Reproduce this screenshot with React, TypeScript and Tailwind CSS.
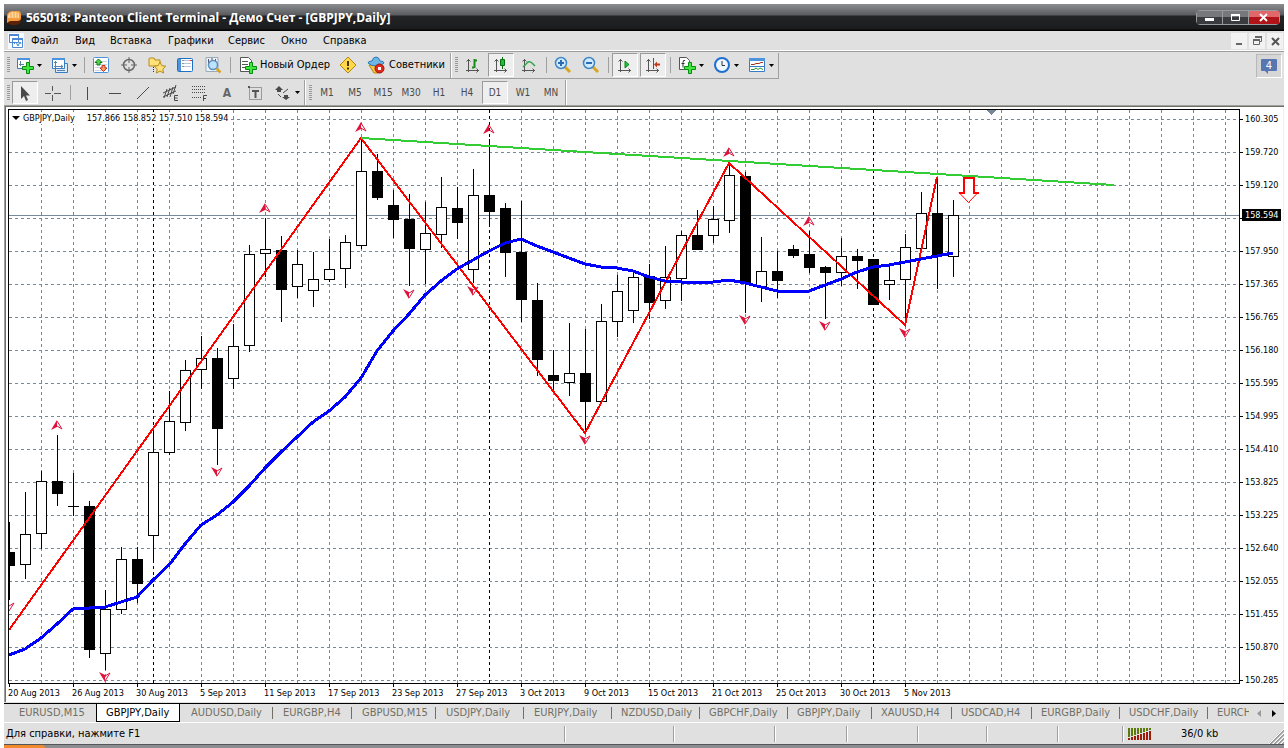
import type { ReactNode } from "react"
import clsx from "clsx"

// x step between bars is 16px: [high, body top, body bottom, low, filled]
const candles: [number, number, number, number, number][] = [
  [522, 552, 566, 600, 1],
  [492, 534, 565, 579, 0],
  [471, 481, 534, 549, 0],
  [435, 481, 494, 506, 1],
  [473, 506, 507, 516, 1],
  [501, 506, 650, 658, 1],
  [590, 609, 654, 670, 0],
  [547, 559, 610, 614, 0],
  [547, 559, 584, 603, 1],
  [428, 452, 536, 560, 0],
  [391, 421, 453, 455, 0],
  [360, 370, 423, 431, 0],
  [336, 358, 370, 389, 0],
  [348, 358, 429, 465, 1],
  [324, 346, 379, 389, 0],
  [245, 254, 346, 352, 0],
  [218, 249, 254, 277, 0],
  [236, 250, 290, 322, 1],
  [250, 264, 287, 298, 0],
  [252, 279, 291, 307, 0],
  [239, 269, 280, 282, 0],
  [235, 242, 269, 288, 0],
  [138, 171, 246, 249, 0],
  [154, 171, 198, 200, 1],
  [190, 205, 220, 238, 1],
  [194, 219, 249, 286, 1],
  [202, 233, 250, 284, 0],
  [177, 207, 235, 248, 0],
  [187, 208, 223, 239, 1],
  [169, 195, 270, 283, 0],
  [139, 195, 212, 225, 1],
  [203, 208, 253, 277, 1],
  [201, 252, 300, 322, 1],
  [283, 300, 360, 376, 1],
  [350, 375, 381, 393, 1],
  [323, 373, 383, 396, 0],
  [329, 373, 402, 432, 1],
  [304, 321, 402, 402, 0],
  [275, 291, 322, 337, 0],
  [272, 277, 311, 323, 0],
  [264, 276, 303, 319, 1],
  [246, 277, 301, 309, 0],
  [231, 235, 279, 301, 0],
  [210, 235, 250, 250, 1],
  [206, 219, 236, 243, 0],
  [163, 175, 221, 233, 0],
  [172, 176, 284, 313, 1],
  [237, 271, 287, 302, 0],
  [251, 271, 281, 298, 1],
  [245, 249, 256, 258, 1],
  [231, 254, 268, 273, 1],
  [266, 267, 273, 319, 1],
  [238, 256, 273, 286, 0],
  [249, 256, 261, 289, 1],
  [259, 259, 305, 305, 1],
  [266, 280, 285, 300, 0],
  [234, 247, 280, 324, 0],
  [192, 213, 249, 249, 0],
  [177, 213, 256, 289, 1],
  [200, 215, 257, 277, 0],
]

const movingAverage =
  "9,655 25,649 41,638 57,624 73,609 105,607 121,602 137,597 153,580 169,565 185,544 201,525 217,515 233,502 249,486 265,468 281,452 297,437 313,422 329,411 345,397 361,378 377,351 393,331 409,314 425,295 441,281 457,269 473,260 489,251 505,243 521,239 537,246 553,252 569,258 585,264 601,267 617,268 633,271 649,277 665,281 681,282 713,282 729,280 745,283 761,287 777,291 809,291 825,285 841,279 857,272 873,267 889,265 905,262 921,259 937,256 953,253"

const fractalsUp = [
  [57, 425],
  [265, 208],
  [361, 127],
  [489, 129],
  [729, 152],
  [809, 221],
]
const fractalsDown = [
  [9, 607],
  [105, 677],
  [217, 472],
  [409, 294],
  [473, 291],
  [585, 440],
  [745, 320],
  [825, 326],
  [905, 333],
]

// the empty row lies under the current price
const prices = [
  "160.305", "159.720", "159.120", "", "157.950", "157.365",
  "156.765", "156.180", "155.595", "154.995", "154.410", "153.825",
  "153.225", "152.640", "152.055", "151.455", "150.870", "150.285",
]

const dates = [
  "20 Aug 2013", "26 Aug 2013", "30 Aug 2013", "5 Sep 2013", "11 Sep 2013",
  "17 Sep 2013", "23 Sep 2013", "27 Sep 2013", "3 Oct 2013", "9 Oct 2013",
  "15 Oct 2013", "21 Oct 2013", "25 Oct 2013", "30 Oct 2013", "5 Nov 2013",
]

const menu = [
  { title: "Файл", width: "w-[44px]" },
  { title: "Вид", width: "w-[35px]" },
  { title: "Вставка", width: "w-[58px]" },
  { title: "Графики", width: "w-[60px]" },
  { title: "Сервис", width: "w-[53px]" },
  { title: "Окно", width: "w-[42px]" },
  { title: "Справка", width: "w-[60px]" },
]

const tabs = [
  { title: "EURUSD,M15", style: "w-[92px] pl-[15px]" },
  { title: "GBPJPY,Daily", style: "w-[84px] pl-[9px]", active: true },
  { title: "AUDUSD,Daily", style: "w-[93px] pl-[11px]", line: true },
  { title: "EURGBP,H4", style: "w-[79px] pl-[10px]", line: true },
  { title: "GBPUSD,M15", style: "w-[84px] pl-[10px]", line: true },
  { title: "USDJPY,Daily", style: "w-[88px] pl-[10px]", line: true },
  { title: "EURJPY,Daily", style: "w-[88px] pl-[10px]", line: true },
  { title: "NZDUSD,Daily", style: "w-[88px] pl-[9px]", line: true },
  { title: "GBPCHF,Daily", style: "w-[88px] pl-[9px]", line: true },
  { title: "GBPJPY,Daily", style: "w-[84px] pl-[9px]", line: true },
  { title: "XAUUSD,H4", style: "w-[80px] pl-[9px]", line: true },
  { title: "USDCAD,H4", style: "w-[80px] pl-[9px]", line: true },
  { title: "EURGBP,Daily", style: "w-[88px] pl-[9px]", line: true },
  { title: "USDCHF,Daily", style: "w-[88px] pl-[9px]", line: true },
  { title: "EURCHF,Daily", style: "w-[88px] pl-[9px]" },
]

const timeframes = ["M1", "M5", "M15", "M30", "H1", "H4", "D1", "W1", "MN"]

const statusCells = [
  "w-[109px]",
  "w-[101px]",
  "w-[72px]",
  "w-[71px]",
  "w-[69px]",
  "w-[71px]",
  "w-[65px]",
]

export default function App() {
  return (
    <div className="bg-white px-1 pt-1 text-[11px] leading-[14px] text-black cursor-default [font-family:'DejaVu_Sans_Condensed','DejaVu_Sans',sans-serif]">
      <div className="bg-[#e0e0e0]">
        <TitleBar />
        <MenuBar />
        <MainToolbar />
        <DrawToolbar />
        <Chart />
        <Tabs />
        <StatusBar />
      </div>
      <div className="h-1 border-t border-[#55565a] bg-[#8c8d91]">
        <div className="h-full w-[41px] rounded-tr-sm bg-[#f08a2c]" />
      </div>
    </div>
  )
}

function TitleBar() {
  return (
    <header className="flex h-[27px] items-center bg-[linear-gradient(#8b8d91_0,#5a5b5f_11px,#232426_12px,#1b1c1e_25px,#000_26px)] pl-[2px] pr-1">
      <svg width="16" height="16" className="shrink-0">
        <rect x="1" y="3" width="14" height="12" rx="5" fill="#5a2208" />
        <path d="M1 10V6q0-4 5-5h6q3 0 3 4v3q0 3-4 3H5q-2 0-4 2z" fill="#f59a3c" />
        <path d="M2 8V6q1-4 5-4h4q2 0 2 3v3z" fill="#ffd9a0" />
        <path d="M5 3v6M8 2v7M11 2v7" stroke="#f0a040" />
      </svg>
      <h1 className="ml-1 grow whitespace-nowrap text-[12px] font-bold text-white [font-family:'Open_Sans','Noto_Sans',sans-serif]">
        565018: Panteon Client Terminal - Демо Счет - [GBPJPY,Daily]
      </h1>
      <div className="flex h-[15px] rounded-sm border border-[#9a9b9f] text-white">
        <button aria-label="Свернуть" className="w-[26px] border-r border-[#9a9b9f] bg-[linear-gradient(#77787c_50%,#3a3b3e_50%)]">
          <svg width="25" height="13" className="block">
            <path d="M8 8.500h9" stroke="#fff" strokeWidth="3" />
          </svg>
        </button>
        <button aria-label="Развернуть" className="w-[26px] border-r border-[#9a9b9f] bg-[linear-gradient(#77787c_50%,#3a3b3e_50%)]">
          <svg width="25" height="13" className="block">
            <path d="M8.500 3.500h8v6h-8z" fill="none" stroke="#fff" />
            <path d="M8 4h9" stroke="#fff" strokeWidth="2" />
          </svg>
        </button>
        <button aria-label="Закрыть" className="w-[30px] bg-[linear-gradient(#e0686a_50%,#b01418_50%)]">
          <svg width="30" height="13" className="block">
            <path d="M11 3l7 7M18 3l-7 7" stroke="#fff" strokeWidth="2" />
          </svg>
        </button>
      </div>
    </header>
  )
}

function MenuBar() {
  return (
    <nav className="flex h-[21px] items-center border-b border-[#9d9d9d] pr-px shadow-[inset_0_-1px_#fff]">
      <svg width="16" height="16" className="mb-px ml-1 shrink-0">
        <rect width="16" height="16" fill="#f6faff" />
        <path d="M1.500 1.500h9v8h-9zM4.500 5.500h10v9h-10z" fill="#fff" stroke="#4d87d6" />
        <path d="M1 2h10M4 6h11" stroke="#4d87d6" strokeWidth="2" />
        <path d="M6 11l2-2 2 4 2-4 1 2" fill="none" stroke="#3a8ad0" />
      </svg>
      <div className="flex grow">
        {menu.map((item) => (
          <button key={item.title} className={clsx("shrink-0 whitespace-nowrap pl-[7px] text-left", item.width)}>
            {item.title}
          </button>
        ))}
      </div>
      <div className="mb-px flex gap-[2px]">
        <MdiButton label="Свернуть окно">
          <path d="M5 11h6" stroke="#666" strokeWidth="2" />
        </MdiButton>
        <MdiButton label="Восстановить окно">
          <path d="M6.500 4v-.500h6v5H11M4.500 7.500h6v4h-6z" fill="none" stroke="#666" />
          <path d="M4 7h7M6 4h7" stroke="#666" strokeWidth="2" />
        </MdiButton>
        <MdiButton label="Закрыть окно">
          <path d="M5 5l7 7M12 5l-7 7" stroke="#555" strokeWidth="2" />
        </MdiButton>
      </div>
    </nav>
  )
}

function MdiButton(_props: { label: string; children: ReactNode }) {
  return (
    <button aria-label={_props.label} className="size-4 bg-[#f2f2f2]">
      <svg width="16" height="16" className="block">
        {_props.children}
      </svg>
    </button>
  )
}

function Grip() {
  return (
    <div className="my-1 ml-[3px] mr-px w-[3px] shrink-0 bg-[repeating-linear-gradient(#999_0_1px,#e0e0e0_1px_2px)]" />
  )
}

function Separator() {
  return (
    <div className="my-1 flex w-[6px] shrink-0 justify-center">
      <div className="w-px bg-[#a0a0a0]" />
    </div>
  )
}

function Caret() {
  return (
    <svg width="5" height="3" className="ml-[3px] shrink-0">
      <path d="M0 0h5L2.500 3z" />
    </svg>
  )
}

function ToolButton(_props: {
  label: string
  children: ReactNode
  pressed?: boolean
  menu?: boolean
}) {
  return (
    <button
      aria-label={_props.label}
      className={clsx(
        "flex shrink-0 items-center justify-center",
        _props.menu ? "w-[35px]" : "mx-px w-[26px]",
        _props.pressed &&
          "border border-b-white border-l-[#9a9a9a] border-r-white border-t-[#9a9a9a] bg-[#eeeeee]"
      )}
    >
      {_props.children}
      {_props.menu && <Caret />}
    </button>
  )
}

function Icon(_props: { children: ReactNode }) {
  return (
    <svg width="18" height="18" viewBox="0 0 18 18" fill="none" className="shrink-0">
      {_props.children}
    </svg>
  )
}

// green plus in the lower right corner of several icons
function Plus() {
  return (
    <path
      d="M10.500 6.500h3v4h4v3h-4v4h-3v-4h-4v-3h4z"
      fill="#3ee83e"
      stroke="#0a8a12"
    />
  )
}

function Axes() {
  return (
    <path
      d="M4.500 3v13M2 14.500h13M2.500 5.500l2-2 2 2M12.500 12.500l2 2-2 2"
      stroke="#555"
    />
  )
}

function MainToolbar() {
  return (
    <div className="flex h-7 items-start justify-between">
      <div className="flex h-[27px] border-b border-[#a0a0a0] pt-px">
        <div className="flex border-r border-[#a0a0a0] pb-px">
          <Grip />
          <ToolButton label="Новый график" menu>
            <Icon>
              <path d="M1.500 2.500h12v10h-12z" fill="#fff" stroke="#3a7cc4" />
              <path d="M1 3h13" stroke="#4d94e0" strokeWidth="2" />
              <path d="M4.500 5v5M3 8.500h5" stroke="#5a7fa8" />
              <Plus />
            </Icon>
          </ToolButton>
          <ToolButton label="Профили" menu>
            <Icon>
              <path d="M4.500 7.500h12v9h-12z" fill="#dcecff" stroke="#3a7cc4" />
              <path d="M1.500 2.500h12v10h-12z" fill="#fff" stroke="#3a7cc4" />
              <path d="M1 3h13" stroke="#4d94e0" strokeWidth="2" />
              <path d="M4.500 5v7M3 6.500h3M3 10.500h9M10 9l2 1.500-2 1.500M6 14.500h8" stroke="#5a7fa8" />
            </Icon>
          </ToolButton>
          <Separator />
          <ToolButton label="Обзор рынка">
            <Icon>
              <rect x="1.500" y="1.500" width="15" height="15" rx="1" fill="#fff" stroke="#4d94e0" />
              <path d="M5 5.500h10M3 8.500h12M3 11.500h12M3 14.500h8" stroke="#c8d4e4" />
              <path d="M6.500 3l3.500 3.500H8V9H5V6.500H3z" fill="#5ad84a" stroke="#0b7a15" />
              <path d="M11.500 15.500L8 12h2V9.500h3V12h2z" fill="#ff9a6a" stroke="#c8361a" />
            </Icon>
          </ToolButton>
          <ToolButton label="Окно данных">
            <Icon>
              <circle cx="9" cy="9" r="5.500" stroke="#666" strokeWidth="1.500" />
              <path d="M9 1v6M9 11v6M1 9h6M11 9h6" stroke="#666" />
            </Icon>
          </ToolButton>
          <ToolButton label="Навигатор">
            <Icon>
              <path d="M1 10V3q0-1 1-1h4l1 2h5v6z" fill="#ffe27a" stroke="#b88a1a" />
              <path d="M5.500 11v6" stroke="#333" strokeDasharray="1 1" />
              <path d="M12 6l1.800 3.600 4 .600-3 2.800.700 4-3.500-2-3.500 2 .700-4-3-2.800 4-.600z" fill="#ffe27a" stroke="#b88a1a" />
            </Icon>
          </ToolButton>
          <ToolButton label="Терминал">
            <Icon>
              <rect x="1.500" y="2.500" width="15" height="13" rx="1" fill="#fff" stroke="#1f6fc4" />
              <path d="M2 3h3v12H2z" fill="#4d94e0" />
              <path d="M6.500 4.500h1M6.500 7.500h1M6.500 10.500h1" stroke="#222" />
              <path d="M8 4.500h6M8 7.500h7M8 10.500h7" stroke="#b8c4d8" />
              <path d="M14 4.500h2" stroke="#e03030" />
            </Icon>
          </ToolButton>
          <ToolButton label="Тестер стратегий">
            <Icon>
              <path d="M2 1.500h12v14H2z" fill="#eef2f6" stroke="#9ab" />
              <path d="M4.500 3v5M8 2v4M11.500 3v3" stroke="#556" />
              <circle cx="9" cy="9" r="4.500" fill="#bfe3ff" stroke="#5a92c0" strokeWidth="1.500" />
              <path d="M12.500 12.500l4 4" stroke="#d9a520" strokeWidth="2.500" />
            </Icon>
          </ToolButton>
          <Separator />
          <button className="flex w-[101px] shrink-0 items-center gap-[3px] whitespace-nowrap pl-[6px]">
            <Icon>
              <path d="M1.500 1.500h8l3 3v11h-11z" fill="#fff" stroke="#555" />
              <path d="M3 5.500h6M3 8.500h6M3 11.500h4" stroke="#555" />
              <Plus />
            </Icon>
            Новый Ордер
          </button>
          <ToolButton label="Метаредактор">
            <Icon>
              <path d="M9 1l8 8-8 8-8-8z" fill="#ffd84a" stroke="#b8860b" />
              <path d="M9 5v5M9 11.500v2" stroke="#4a3500" strokeWidth="2" />
            </Icon>
          </ToolButton>
          <button className="flex w-[88px] shrink-0 items-center gap-1 whitespace-nowrap pl-[5px]">
            <Icon>
              <path d="M2 9h12l2 3-5 5H7z" fill="#f5c842" stroke="#b8860b" />
              <path d="M5 5q1-4 4-4t4 4q4 0 4 2-3 3-8 3T1 7q0-2 4-2z" fill="#6cb6e8" stroke="#2b78b0" />
              <circle cx="12.500" cy="12.500" r="4.500" fill="#e02a1c" stroke="#a01008" />
              <path d="M11 11h3v3h-3z" fill="#fff" />
            </Icon>
            Советники
          </button>
        </div>
        <div className="flex border-l border-r border-l-white border-r-[#a0a0a0] pb-px">
          <Grip />
          <ToolButton label="Бары">
            <Icon>
              <Axes />
              <path d="M10.500 3v9M8 11.500h2M11 4.500h2" stroke="#1a8a1a" strokeWidth="2" />
            </Icon>
          </ToolButton>
          <ToolButton label="Японские свечи" pressed>
            <Icon>
              <Axes />
              <path d="M10.500 1v12" stroke="#0b6a12" />
              <path d="M8.500 3.500h4v6h-4z" fill="#22c03a" stroke="#0b6a12" />
            </Icon>
          </ToolButton>
          <ToolButton label="Линия">
            <Icon>
              <Axes />
              <path d="M3 11l5-5q2-1 4 1l3 3" stroke="#2fa54a" strokeWidth="1.500" />
            </Icon>
          </ToolButton>
          <Separator />
          <ToolButton label="Увеличить">
            <Icon>
              <path d="M11 11l5 5" stroke="#d9a520" strokeWidth="3" />
              <circle cx="7" cy="7" r="5.500" fill="#cfeaff" stroke="#3f86c4" strokeWidth="1.500" />
              <path d="M4 7h6M7 4v6" stroke="#2b6cb0" strokeWidth="2" />
            </Icon>
          </ToolButton>
          <ToolButton label="Уменьшить">
            <Icon>
              <path d="M11 11l5 5" stroke="#d9a520" strokeWidth="3" />
              <circle cx="7" cy="7" r="5.500" fill="#cfeaff" stroke="#3f86c4" strokeWidth="1.500" />
              <path d="M4 7h6" stroke="#2b6cb0" strokeWidth="2" />
            </Icon>
          </ToolButton>
          <Separator />
          <ToolButton label="Автопрокрутка" pressed>
            <Icon>
              <Axes />
              <path d="M9 5l4 3.500L9 12z" fill="#22c03a" stroke="#0b8a1a" />
            </Icon>
          </ToolButton>
          <ToolButton label="Сдвиг графика" pressed>
            <Icon>
              <Axes />
              <path d="M9.500 2v11" stroke="#1f5fa0" />
              <path d="M10 8.500l3-3v2h3v2h-3v2z" fill="#c03a1a" />
            </Icon>
          </ToolButton>
          <Separator />
          <ToolButton label="Индикаторы" menu>
            <Icon>
              <path d="M1.500 1.500h7l3 3v9h-10z" fill="#fff" stroke="#555" />
              <path d="M7 4.500q-2-1-2 2v5M3.500 7.500h3" stroke="#333" />
              <Plus />
            </Icon>
          </ToolButton>
          <ToolButton label="Периоды" menu>
            <Icon>
              <circle cx="9" cy="9" r="7" fill="#eef6ff" stroke="#1f6fd0" strokeWidth="2" />
              <path d="M9 5v4.500h3" stroke="#333" />
            </Icon>
          </ToolButton>
          <ToolButton label="Шаблоны" menu>
            <Icon>
              <path d="M1.500 2.500h15v13h-15z" fill="#fff" stroke="#3a7cc4" />
              <path d="M1 3.500h16" stroke="#4d94e0" strokeWidth="3" />
              <path d="M3 8.500h3l2-1h3l2-1h2" stroke="#a03020" />
              <path d="M2 10.500h14" stroke="#3a7cc4" />
              <path d="M3 13.500h3l2-1.500 2 1.500 2-1.500 3 1.500" stroke="#2f9a3a" />
            </Icon>
          </ToolButton>
        </div>
      </div>
      <button aria-label="Сообщения: 4" className="mr-[2px] mt-[2px] flex h-6 w-[26px] items-center justify-center border border-white border-l-[#b8b8b8] border-t-[#b8b8b8] bg-[#d6d6d6]">
        <svg width="18" height="18" viewBox="0 0 18 18">
          <rect x="1" y="2" width="16" height="12" rx="1" fill="#5877b0" />
          <path d="M4 13h4v4z" fill="#5877b0" />
          <text x="9" y="12" textAnchor="middle" fontSize="11" fill="#fff">
            4
          </text>
        </svg>
      </button>
    </div>
  )
}

function DrawToolbar() {
  return (
    <div className="flex h-[25px] text-[10px] text-[#4a4a4a]">
      <div className="flex border-r border-[#a0a0a0] py-px">
        <Grip />
        <ToolButton label="Курсор" pressed>
          <Icon>
            <path d="M5 2v13l3-3 2 5 2-1-2-4.500h4z" fill="#4a4a4a" />
          </Icon>
        </ToolButton>
        <ToolButton label="Перекрестие">
          <Icon>
            <path d="M8.500 2v5M8.500 11v6M1 9.500h6M10 9.500h7" stroke="#555" />
          </Icon>
        </ToolButton>
        <Separator />
        <ToolButton label="Вертикальная линия">
          <Icon>
            <path d="M9.500 3v13" stroke="#4a4a4a" />
          </Icon>
        </ToolButton>
        <ToolButton label="Горизонтальная линия">
          <Icon>
            <path d="M3 9.500h12" stroke="#4a4a4a" />
          </Icon>
        </ToolButton>
        <ToolButton label="Трендовая линия">
          <Icon>
            <path d="M3 15L15 3" stroke="#4a4a4a" />
          </Icon>
        </ToolButton>
        <ToolButton label="Равноудаленный канал">
          <Icon>
            <path d="M1 9l13-6M1 13l13-6M5 5l-3 9M8 4l-3 9M11 3L8 13M14 1l-3 9" stroke="#4a4a4a" />
            <path d="M16 11.500h-3.500v5H16M12 14h3.500" stroke="#4a4a4a" />
          </Icon>
        </ToolButton>
        <ToolButton label="Линии Фибоначчи">
          <Icon>
            <path d="M2 2.500h13M2 5.500h13M2 8.500h13M2 13.500h10" stroke="#4a4a4a" strokeDasharray="1 1" />
            <path d="M17 11.500h-3.500V17M13 14.500h3" stroke="#4a4a4a" />
          </Icon>
        </ToolButton>
        <button aria-label="Текст" className="mx-px w-[26px] shrink-0 text-[12px] font-bold text-[#666]">
          A
        </button>
        <ToolButton label="Текстовая метка">
          <Icon>
            <path d="M3.500 3.500h12v12h-12z" stroke="#555" strokeDasharray="1 1" />
            <path d="M6 7h7M9.500 6v8" stroke="#555" strokeWidth="2" />
            <path d="M2 2h2v2H2z" fill="#555" />
          </Icon>
        </ToolButton>
        <ToolButton label="Стрелки" menu>
          <Icon>
            <path d="M5 2l4 4H7v2H3V6H1zM12 16l-4-3h2v-2h4v2h2z" fill="#4a4a4a" />
            <path d="M4 10l3 3M9 9l5-4" stroke="#4a4a4a" />
          </Icon>
        </ToolButton>
      </div>
      <div className="flex border-l border-r border-l-white border-r-[#a0a0a0] py-px">
        <Grip />
        {timeframes.map((frame) => (
          <ToolButton key={frame} label={frame} pressed={frame === "D1"}>
            {frame}
          </ToolButton>
        ))}
      </div>
      <div className="w-px bg-white" />
    </div>
  )
}

function Chart() {
  return (
    <main className="border-l border-t border-[#a0a0a0] text-[9px] leading-[12px]">
      <div className="flex border-l border-t border-[#716f64] bg-white">
        <div className="relative min-w-0 grow pl-[2px] pt-[2px]">
          <div className="border border-black">
            <Plot />
          </div>
          <div className="absolute left-[3px] top-[5px] flex h-3 items-center whitespace-pre bg-white pl-[3px]">
            <svg width="8" height="4" className="mr-[3px]">
              <path d="M0 0h8L4 4z" />
            </svg>
            <span>GBPJPY,Daily</span>
            <span className="ml-3">157.866 158.852 157.510 158.594</span>
          </div>
          <div className="flex h-[18px] overflow-hidden">
            {dates.map((date) => (
              <div key={date} className="w-16 shrink-0 whitespace-nowrap">
                <div className="ml-px h-[3px] w-px bg-black" />
                {date}
              </div>
            ))}
          </div>
        </div>
        <div className="relative w-[44px] shrink-0 border-r border-[#f0f0f0] pt-[6px]">
          {prices.map((price, index) => (
            <div key={index} className="flex h-[33px] items-start last-of-type:h-3">
              <div className="mt-[6px] h-px w-[3px] bg-black" />
              <span className="ml-[2px]">{price}</span>
            </div>
          ))}
          <p className="absolute left-[2px] top-[102px] w-[39px] bg-black pl-[3px] text-white">
            158.594
          </p>
        </div>
      </div>
    </main>
  )
}

function Plot() {
  return (
    <svg className="block h-[573px] w-full" shapeRendering="crispEdges" fill="none">
      <g transform="translate(-9 -110)">
        <g stroke="#778899" strokeDasharray="3 3">
          {prices.map((_, index) => (
            <line key={index} x1="9" x2="1239" y1={119.5 + index * 33} y2={119.5 + index * 33} />
          ))}
          {Array.from({ length: 38 }, (_, index) => (
            <line key={index} x1={41.5 + index * 32} x2={41.5 + index * 32} y1="110" y2="683" />
          ))}
        </g>
        {[153.5, 489.5, 873.5].map((x) => (
          <g key={x}>
            <path d={`M${x} 110v573`} stroke="#fff" />
            <path d={`M${x} 110v573`} stroke="#000" strokeDasharray="3 3" />
          </g>
        ))}
        <path d="M9 215.500h1230" stroke="#778899" />
        {candles.map(([high, top, bottom, low, filled], index) => {
          const x = 9 + index * 16
          return (
            <g key={index}>
              <rect x={x} y={high} width="1" height={low - high} fill="#000" />
              <rect x={x - 5} y={top} width="11" height={bottom - top} fill="#000" />
              {!filled && (
                <rect x={x - 4} y={top + 1} width="9" height={bottom - top - 2} fill="#fff" />
              )}
            </g>
          )
        })}
        <polyline points="9,630 361,138 585,433 729,163 905,325 937,177" stroke="#f00" strokeWidth="2" />
        <polyline points={movingAverage} stroke="#00f" strokeWidth="3" />
        <path d="M361 138l753 47" stroke="#32cd32" strokeWidth="2" />
        {fractalsUp.map(([x, y]) => (
          <Fractal key={x} transform={`translate(${x} ${y})`} />
        ))}
        {fractalsDown.map(([x, y]) => (
          <Fractal key={x} transform={`translate(${x} ${y}) scale(1 -1)`} />
        ))}
        <path d="M964 178.500h9.500v14h4.500l-9.500 10-9.500-10h5z" fill="#fff" stroke="#f00" shapeRendering="auto" />
        <path d="M959 193h5v-15h9.500v15h5" stroke="#f00" strokeWidth="2" />
        <path d="M986 110h11l-5.500 5z" fill="#778899" />
      </g>
    </svg>
  )
}

function Fractal(_props: { transform: string }) {
  return (
    <g transform={_props.transform} shapeRendering="auto">
      <path d="M0-5L-6 5l6-3z" fill="#dc143c" />
      <path d="M0-4l5 8-5-3" stroke="#dc143c" />
    </g>
  )
}

function Tabs() {
  return (
    <div className="mt-px flex h-5 border-b border-t border-b-white border-t-black">
      <div className="flex min-w-0 grow basis-0 overflow-hidden text-[#716f64]">
        {tabs.map((tab, index) => (
          <button
            key={index}
            className={clsx(
              "flex shrink-0 whitespace-nowrap pt-[2px]",
              tab.style,
              tab.active && "border border-t-0 border-black bg-white text-black"
            )}
          >
            <span className="grow text-left">{tab.title}</span>
            {tab.line && <span className="mt-px h-3 w-px bg-[#716f64]" />}
          </button>
        ))}
      </div>
      <div className="flex shrink-0 items-center gap-[11px] px-2">
        <button aria-label="Назад">
          <svg width="4" height="7" className="block">
            <path d="M4 0v7L0 3.500z" fill="#999" />
          </svg>
        </button>
        <button aria-label="Вперед">
          <svg width="4" height="7" className="block">
            <path d="M0 0v7l4-3.500z" />
          </svg>
        </button>
      </div>
    </div>
  )
}

function StatusBar() {
  return (
    <footer className="flex h-[21px] items-center">
      <p className="grow whitespace-nowrap pl-[2px]">Для справки, нажмите F1</p>
      {statusCells.map((width, index) => (
        <div key={index} className={clsx("h-4 shrink-0 border-l border-[#a0a0a0] shadow-[inset_1px_0_#fff]", width)} />
      ))}
      <div className="flex h-full w-[162px] shrink-0 items-center">
        <div className="h-4 border-l border-r border-l-[#a0a0a0] border-r-white" />
        <svg width="24" height="12" className="ml-1">
          {[0, 1, 2, 3, 4, 5, 6, 7].map((bar) => (
            <g key={bar}>
              <rect x={bar * 3} y="0" width="2" height={9 - bar} fill="#5a7a0a" />
              <rect x={bar * 3} y={10 - bar} width="2" height={2 + bar} fill="#a01c0a" />
            </g>
          ))}
        </svg>
        <span className="ml-[29px] grow whitespace-nowrap">36/0 kb</span>
        <svg width="15" height="15" className="mt-auto">
          <path d="M1 15L15 1M5 15L15 5M9 15l6-6M13 15l2-2" stroke="#999" strokeWidth="2" />
          <path d="M0 15L15 0M4 15L15 4M8 15l7-7M12 15l3-3" stroke="#fff" />
        </svg>
      </div>
    </footer>
  )
}
